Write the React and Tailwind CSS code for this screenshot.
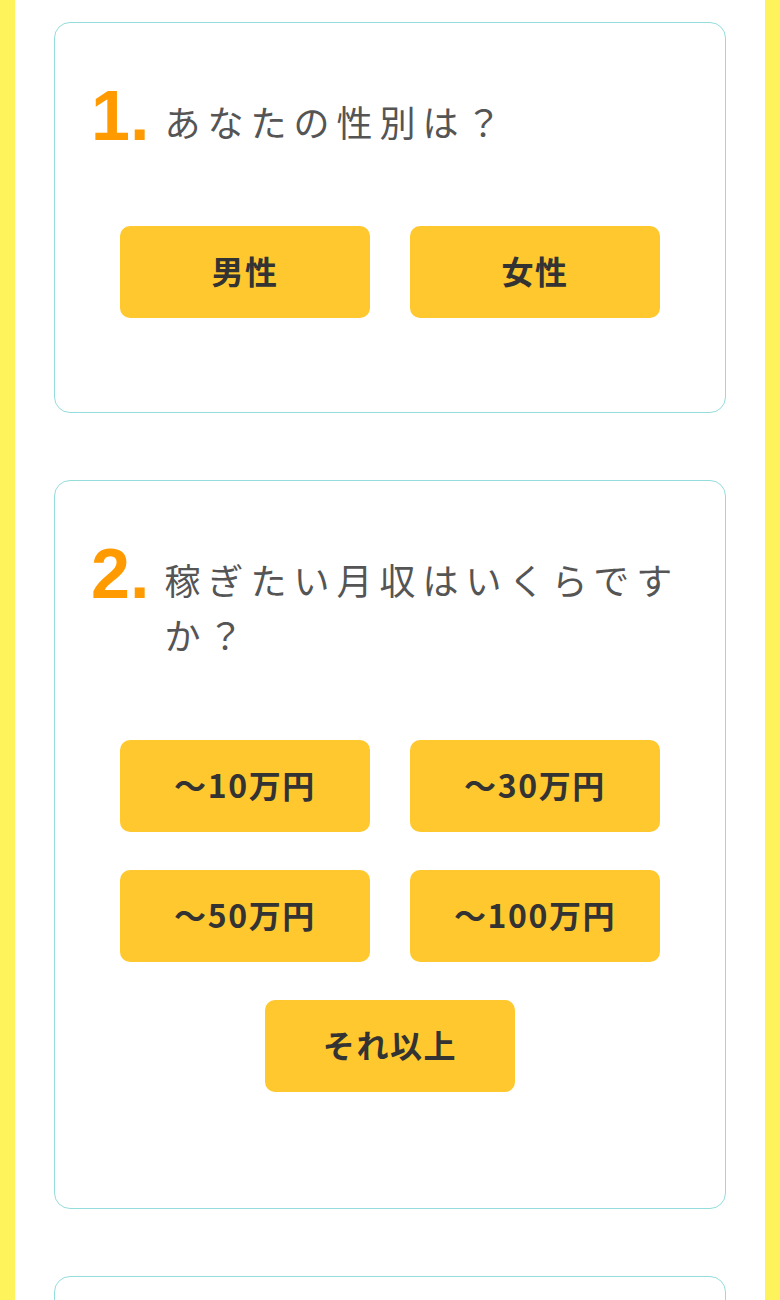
import React from "react";

function Btn({ children }) {
  return (
    <button className="w-[250px] h-[92px] rounded-[10px] bg-[#ffc82e] text-[#333333] text-[32px] font-bold tracking-[0.05em] flex items-center justify-center pb-[5px] font-['Noto_Sans_CJK_JP','Noto_Sans',sans-serif]">
      {children}
    </button>
  );
}

function Card({ n, q, cardClass, rowClass, children }) {
  return (
    <div className={"border border-[#95dcdc] rounded-[16px] bg-white px-[36px] pt-[58px] " + cardClass}>
      <div className="flex items-baseline gap-[15px]">
        <span className="text-[70px] leading-none font-bold text-[#ff9a00] shrink-0 font-['Liberation_Sans',Arial,sans-serif]">
          {n}.
        </span>
        <p className="text-[36px] leading-[55px] text-[#555555] tracking-[7px] relative top-[-3px] font-['Noto_Sans_CJK_JP','Noto_Sans',sans-serif]">
          {q}
        </p>
      </div>
      <div className={"flex flex-wrap justify-center gap-x-[40px] gap-y-[38px] " + rowClass}>
        {children}
      </div>
    </div>
  );
}

export default function App() {
  return (
    <div className="min-h-[1300px] bg-[#fff35c] px-[15px]">
      <div className="bg-white min-h-[1300px] px-[39px] pt-[22px] flex flex-col gap-[67px]">
        <Card n="1" q="あなたの性別は？" cardClass="pb-[94px]" rowClass="mt-[74px]">
          <Btn>男性</Btn>
          <Btn>女性</Btn>
        </Card>
        <Card n="2" q="稼ぎたい月収はいくらですか？" cardClass="pb-[116px]" rowClass="mt-[75px]">
          <Btn>〜10万円</Btn>
          <Btn>〜30万円</Btn>
          <Btn>〜50万円</Btn>
          <Btn>〜100万円</Btn>
          <Btn>それ以上</Btn>
        </Card>
        <div className="border border-[#95dcdc] rounded-[16px] bg-white h-[400px]" />
      </div>
    </div>
  );
}
